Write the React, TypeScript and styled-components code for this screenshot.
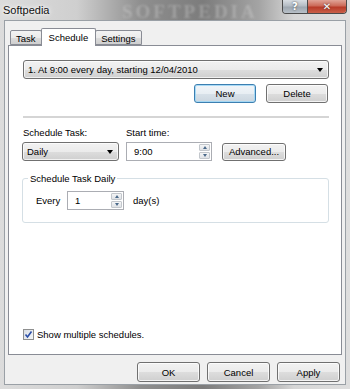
import React from "react";
import styled, { createGlobalStyle } from "styled-components";

const GlobalStyle = createGlobalStyle`
  html, body {
    margin: 0;
    padding: 0;
    background: #d4d8dd;
  }
  * {
    box-sizing: border-box;
  }
`;

const Window = styled.div`
  display: flex;
  flex-direction: column;
  width: 350px;
  height: 389px;
  overflow: hidden;
  background: linear-gradient(90deg, #dcdcdc 0%, #cfcfcf 22%, #8f8f8f 40%, #7c7c7c 58%, #a4a4a4 74%, #d6d6d6 84%, #dedede 100%);
  font-family: "Liberation Sans", Arial, sans-serif;
  font-size: 9.5px;
  color: #000;
`;

const TitleBar = styled.div`
  position: relative;
  display: flex;
  align-items: flex-start;
  height: 20px;
  padding-left: 3px;
`;

const Title = styled.span`
  position: relative;
  margin-top: 4px;
  font-size: 11px;
  color: #111;
  text-shadow: 0 0 6px #ffffff, 0 0 3px #ffffff;
`;

const Watermark = styled.span`
  position: absolute;
  left: 122px;
  top: 1px;
  font-family: "Liberation Serif", serif;
  font-weight: bold;
  font-size: 19px;
  letter-spacing: 3px;
  color: rgba(225, 225, 225, 0.3);
  filter: blur(1px);
`;

const CaptionButtons = styled.div`
  position: absolute;
  right: 3px;
  top: 0;
  display: flex;
  border: 1px solid #4a4a4a;
  border-top: none;
  border-radius: 0 0 4px 4px;
  overflow: hidden;
`;

const CaptionButton = styled.div<{ $close?: boolean }>`
  display: flex;
  align-items: center;
  justify-content: center;
  width: ${(p) => (p.$close ? "39px" : "24px")};
  height: 13px;
  font-family: "DejaVu Sans", sans-serif;
  font-weight: bold;
  font-size: 10px;
  color: #fff;
  text-shadow: 0 0 2px #333;
  background: ${(p) =>
    p.$close
      ? "linear-gradient(#e0a497 0%, #cc6a58 45%, #b83b28 55%, #c95f48 100%)"
      : "linear-gradient(#d8dde2 0%, #b4bcc4 45%, #9ea7b0 55%, #b8c0c8 100%)"};
  & + & {
    border-left: 1px solid #4a4a4a;
  }
`;

const Client = styled.div`
  flex: 1;
  display: flex;
  flex-direction: column;
  margin: 0 4px 4px 4px;
  padding: 7px 3px 0 3px;
  background: #f0f0f0;
  border: 1px solid #9aa0a6;
`;

const TabStrip = styled.div`
  display: flex;
  align-items: flex-end;
  height: 17px;
  padding-left: 2px;
`;

const Tab = styled.div<{ $active?: boolean }>`
  display: flex;
  align-items: center;
  justify-content: center;
  height: ${(p) => (p.$active ? "18px" : "15px")};
  padding: 0 ${(p) => (p.$active ? "7px" : "5px")};
  margin-bottom: ${(p) => (p.$active ? "-1px" : "0")};
  margin-left: ${(p) => (p.$active ? "-1px" : "0")};
  margin-right: ${(p) => (p.$active ? "-1px" : "0")};
  border: 1px solid #898c95;
  border-bottom: ${(p) => (p.$active ? "none" : "1px solid #898c95")};
  border-radius: 2px 2px 0 0;
  background: ${(p) =>
    p.$active ? "#ffffff" : "linear-gradient(#f3f3f3 0%, #ebebeb 50%, #dddddd 51%, #cfcfcf 100%)"};
  position: relative;
  z-index: ${(p) => (p.$active ? 2 : 1)};
  padding-top: ${(p) => (p.$active ? "0" : "2px")};
`;

const Panel = styled.div`
  position: relative;
  z-index: 1;
  display: flex;
  flex-direction: column;
  height: 310px;
  padding: 14px 12px 0 14px;
  background: #ffffff;
  border: 1px solid #898c95;
`;

const ComboBox = styled.div<{ $width: number }>`
  display: flex;
  align-items: center;
  justify-content: space-between;
  width: ${(p) => p.$width}px;
  height: 19px;
  padding: 0 5px 0 4px;
  border: 1px solid #707070;
  border-radius: 3px;
  background: linear-gradient(#f2f2f2 0%, #ebebeb 50%, #dddddd 51%, #cfcfcf 100%);
  box-shadow: inset 0 0 0 1px rgba(255, 255, 255, 0.7);
`;

const Arrow = styled.span`
  width: 0;
  height: 0;
  border-left: 3.5px solid transparent;
  border-right: 3.5px solid transparent;
  border-top: 4px solid #000;
`;

const ButtonRow = styled.div`
  display: flex;
  justify-content: flex-end;
  gap: 10px;
  margin-top: 5px;
  padding-right: 1px;
`;

const Button = styled.div<{ $width?: number; $default?: boolean; $height?: number }>`
  display: flex;
  align-items: center;
  justify-content: center;
  width: ${(p) => p.$width ?? 62}px;
  height: ${(p) => p.$height ?? 19}px;
  border: 1px solid ${(p) => (p.$default ? "#3c7fb1" : "#707070")};
  border-radius: 3px;
  background: ${(p) =>
    p.$default
      ? "linear-gradient(#f1f5f9 0%, #e8eef3 50%, #d8e1e9 51%, #cbd6df 100%)"
      : "linear-gradient(#f2f2f2 0%, #ebebeb 50%, #dddddd 51%, #cfcfcf 100%)"};
  box-shadow: inset 0 0 0 1px ${(p) => (p.$default ? "rgba(160, 215, 245, 0.9)" : "rgba(255, 255, 255, 0.75)")};
`;

const Separator = styled.div`
  height: 2px;
  margin: 13px 0 0 0;
  background: #d5d5d5;
`;

const FieldRow = styled.div<{ $gap: number; $top: number; $indent?: number }>`
  display: flex;
  align-items: center;
  gap: ${(p) => p.$gap}px;
  margin-top: ${(p) => p.$top}px;
  margin-left: ${(p) => p.$indent ?? 0}px;
`;

const Label = styled.span<{ $width?: number }>`
  width: ${(p) => (p.$width ? `${p.$width}px` : "auto")};
  white-space: nowrap;
`;

const SpinBox = styled.div<{ $width: number }>`
  display: flex;
  align-items: stretch;
  width: ${(p) => p.$width}px;
  height: 19px;
  border: 1px solid #abadb3;
  background: #ffffff;
`;

const SpinText = styled.span`
  flex: 1;
  display: flex;
  align-items: center;
  padding-left: 7px;
`;

const SpinButtons = styled.div`
  display: flex;
  flex-direction: column;
  width: 13px;
  gap: 1px;
  padding: 1px;
`;

const SpinHalf = styled.div<{ $up?: boolean }>`
  flex: 1;
  display: flex;
  align-items: center;
  justify-content: center;
  border: 1px solid #c3c7cc;
  border-radius: 1px;
  background: linear-gradient(#f4f5f6, #dfe2e6);
  &::after {
    content: "";
    width: 0;
    height: 0;
    border-left: 2.5px solid transparent;
    border-right: 2.5px solid transparent;
    ${(p) => (p.$up ? "border-bottom: 3px solid #4b6a8a;" : "border-top: 3px solid #4b6a8a;")}
  }
`;

const GroupBox = styled.fieldset`
  margin: 12px 0 0 -1px;
  padding: 7px 0 0 5px;
  height: 50px;
  border: 1px solid #d5dfe5;
  border-radius: 3px;
  min-width: 0;
`;

const Legend = styled.legend`
  padding: 0 2px;
  margin-left: 0;
`;

const CheckRow = styled.div`
  display: flex;
  align-items: center;
  gap: 3px;
  margin-top: auto;
  margin-bottom: 14px;
`;

const CheckBox = styled.div`
  display: flex;
  align-items: center;
  justify-content: center;
  width: 11px;
  height: 11px;
  border: 1px solid #8e8f8f;
  background: linear-gradient(135deg, #d8dde4, #f4f6f8);
`;

const Footer = styled.div`
  display: flex;
  justify-content: flex-end;
  gap: 7px;
  padding: 7px 2px 0 0;
`;

export default function App() {
  return (
    <>
      <GlobalStyle />
      <Window>
        <TitleBar>
          <Watermark>SOFTPEDIA</Watermark>
          <Title>Softpedia</Title>
          <CaptionButtons>
            <CaptionButton>?</CaptionButton>
            <CaptionButton $close>✕</CaptionButton>
          </CaptionButtons>
        </TitleBar>
        <Client>
          <TabStrip>
            <Tab>Task</Tab>
            <Tab $active>Schedule</Tab>
            <Tab>Settings</Tab>
          </TabStrip>
          <Panel>
            <ComboBox $width={306}>
              <span>1. At 9:00 every day, starting 12/04/2010</span>
              <Arrow />
            </ComboBox>
            <ButtonRow>
              <Button $default>New</Button>
              <Button>Delete</Button>
            </ButtonRow>
            <Separator />
            <FieldRow $gap={0} $top={9}>
              <Label $width={103}>Schedule Task:</Label>
              <Label>Start time:</Label>
            </FieldRow>
            <FieldRow $gap={7} $top={4} $indent={-1}>
              <ComboBox $width={97}>
                <span>Daily</span>
                <Arrow />
              </ComboBox>
              <SpinBox $width={86}>
                <SpinText>9:00</SpinText>
                <SpinButtons>
                  <SpinHalf $up />
                  <SpinHalf />
                </SpinButtons>
              </SpinBox>
              <Button $width={64} $height={18} style={{ marginLeft: 3 }}>
                Advanced...
              </Button>
            </FieldRow>
            <GroupBox>
              <Legend>Schedule Task Daily</Legend>
              <FieldRow $gap={9} $top={0} $indent={8}>
                <Label $width={22}>Every</Label>
                <SpinBox $width={57}>
                  <SpinText>1</SpinText>
                  <SpinButtons>
                    <SpinHalf $up />
                    <SpinHalf />
                  </SpinButtons>
                </SpinBox>
                <Label>day(s)</Label>
              </FieldRow>
            </GroupBox>
            <CheckRow>
              <CheckBox>
                <svg width="9" height="9" viewBox="0 0 9 9">
                  <path d="M1.5 4.5 L3.5 7 L7.5 1.5" fill="none" stroke="#2a4ea8" strokeWidth="1.6" />
                </svg>
              </CheckBox>
              <span>Show multiple schedules.</span>
            </CheckRow>
          </Panel>
          <Footer>
            <Button $width={63} $height={20}>OK</Button>
            <Button $width={63} $height={20}>Cancel</Button>
            <Button $width={63} $height={20}>Apply</Button>
          </Footer>
        </Client>
      </Window>
    </>
  );
}
